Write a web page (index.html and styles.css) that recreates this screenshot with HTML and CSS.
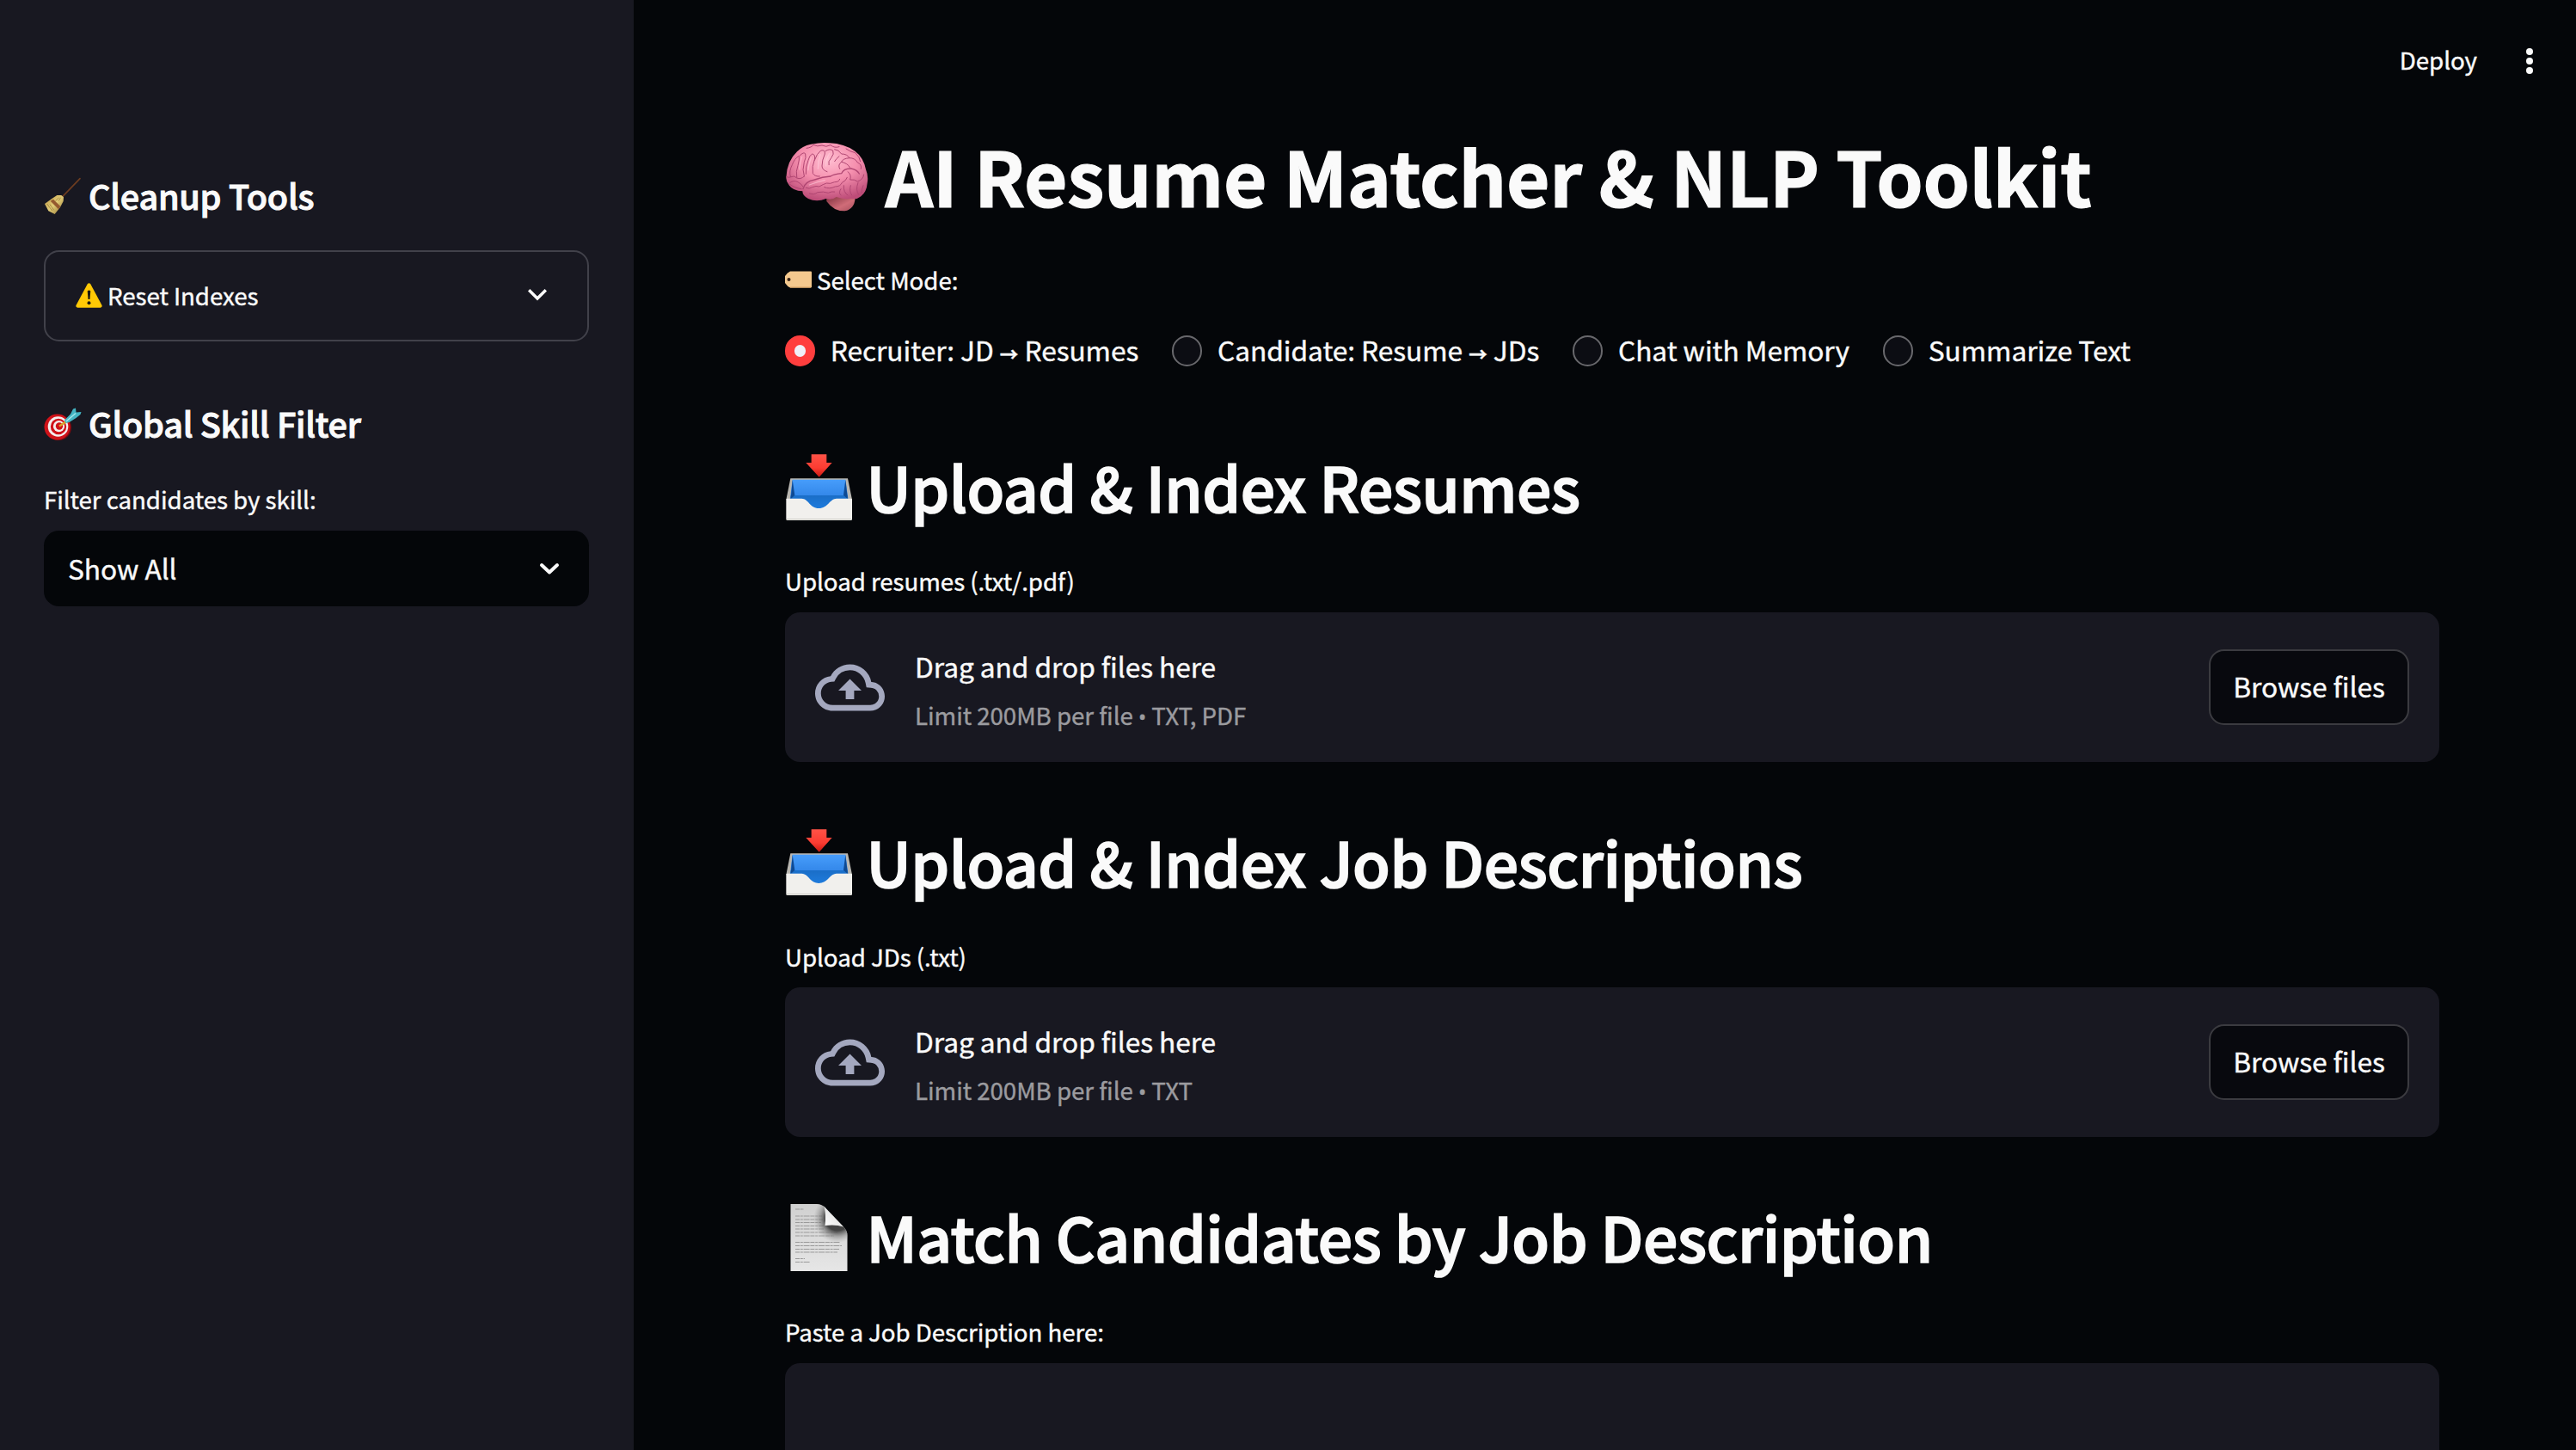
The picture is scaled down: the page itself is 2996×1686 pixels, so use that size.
FILE: index.html
```html
<!DOCTYPE html>
<html lang="en">
<head>
<meta charset="utf-8">
<title>AI Resume Matcher &amp; NLP Toolkit</title>
<link rel="stylesheet" href="styles.css">
</head>
<body>
<svg class="defs" width="0" height="0" aria-hidden="true">
  <defs>
    <linearGradient id="blue" x1="0" y1="0" x2="0" y2="1"><stop offset="0" stop-color="#479dfb"/><stop offset=".55" stop-color="#3488ea"/><stop offset=".56" stop-color="#1a6ec8"/><stop offset="1" stop-color="#1e7bdc"/></linearGradient>
    <linearGradient id="red" x1="0" y1="0" x2="0" y2="1"><stop offset="0" stop-color="#ff5246"/><stop offset=".6" stop-color="#fb3c32"/><stop offset="1" stop-color="#c81810"/></linearGradient>
    <symbol id="tray" viewBox="24 20 243 237">
      <path d="M119 24h53v29h19l-45 50-46-50h19z" fill="url(#red)"/>
      <path d="M46 108h200l15 74H31z" fill="#b9b7b2"/>
      <path d="M53 112h185l10 72-52 28H98l-54-28z" fill="url(#blue)"/>
      <path d="M53 112l8 54-14 14zM238 112l-7 54 15 14z" fill="#0e4a94"/>
      <path d="M31 181q0-3 4-3h50c24 0 28 34 60 34s38-34 62-34h50q4 0 4 3v69q0 4-4 4H35q-4 0-4-4z" fill="#f1f0ed"/>
      <path d="M33 250h226" stroke="#cfcdc8" stroke-width="4"/>
    </symbol>
    <symbol id="cloud" viewBox="0 0 24 24">
      <path d="M19.35 10.04A7.49 7.49 0 0 0 12 4C9.11 4 6.6 5.64 5.35 8.04A5.994 5.994 0 0 0 0 14c0 3.31 2.69 6 6 6h13c2.76 0 5-2.24 5-5 0-2.64-2.05-4.78-4.65-4.96zM19 18H6c-2.21 0-4-1.79-4-4 0-2.05 1.53-3.76 3.56-3.97l1.07-.11.5-.95A5.469 5.469 0 0 1 12 6c2.62 0 4.88 1.86 5.39 4.43l.3 1.5 1.53.11A2.98 2.98 0 0 1 22 15c0 1.65-1.35 3-3 3zM8 13h2.55v3h2.9v-3H16l-4-4z" fill="currentColor"/>
    </symbol>
  </defs>
</svg>
<div class="app">
  <aside class="sidebar">
    <h3 class="side-title">
      <svg class="side-icon" width="44" height="46" viewBox="33 24 132 138">
        <defs><linearGradient id="straw" x1="0" y1="0" x2="1" y2="1"><stop offset="0" stop-color="#b8923f"/><stop offset=".5" stop-color="#e2cc78"/><stop offset="1" stop-color="#8e6f2c"/></linearGradient></defs>
        <path d="M159 32L96 97" stroke="#6e3d20" stroke-width="5" stroke-linecap="round"/>
        <path d="M94 90l8 7-1 14-11 21-19 24-22-11-13-25 26-19 17-11z" fill="url(#straw)"/>
        <path d="M66 104l25 25-7 10-28-29z" fill="#94592f"/>
        <path d="M44 120l18 24M54 122l14 20M92 98l-8 12M86 98l-12 12" stroke="#8a6c2c" stroke-width="2"/>
      </svg>
      <span class="side-text">Cleanup Tools</span>
    </h3>
    <div class="expander">
      <svg class="warn" width="31" height="29" viewBox="0 0 31 29">
        <path d="M13.600 1.400q1.900-2.400 3.800 0l13 24.400q1 2.600-1.600 2.900H2.200Q-.500 28.400.600 25.800z" fill="#ffc905"/>
        <path d="M13.700 9.500q1.800-2 3.600 0l-.8 9.500h-2z" fill="#1c1a10"/><circle cx="15.500" cy="23.300" r="2" fill="#1c1a10"/>
      </svg>
      <span class="label-text">Reset Indexes</span>
      <svg class="chevron" width="24" height="15" viewBox="0 0 24 15"><path d="M2.200 2.200L12 12l9.800-9.800" fill="none" stroke="#fafafa" stroke-width="3.400"/></svg>
    </div>
    <h3 class="side-title second">
      <svg class="side-icon" width="44" height="38" viewBox="0 0 44 38">
        <ellipse cx="17" cy="23" rx="15" ry="15" fill="#7e0a10"/>
        <circle cx="15.500" cy="22.500" r="15" fill="#cf1219"/><circle cx="16.500" cy="22" r="11.800" fill="#f4eeee"/><circle cx="17" cy="22" r="9.200" fill="#cf1219"/><circle cx="17.500" cy="21.700" r="6.600" fill="#f4eeee"/><circle cx="18" cy="21.500" r="4.200" fill="#cf1219"/>
        <path d="M18 21.500l9-6" stroke="#d9a72b" stroke-width="2.400"/>
        <path d="M24 14.500l7-7 3-6 3-1 .5 5 6-.5-1 3-5 4-8 5-4 1z" fill="#43b4c2"/>
        <path d="M26 16l11-9.500" stroke="#a2e6ea" stroke-width="1.600"/>
      </svg>
      <span class="side-text">Global Skill Filter</span>
    </h3>
    <div class="label side-label">Filter candidates by skill:</div>
    <div class="select">
      <span class="select-value">Show All</span>
      <svg width="24" height="15" viewBox="0 0 24 15"><path d="M3 3l9 8.500L21 3" fill="none" stroke="#fafafa" stroke-width="4" stroke-linecap="round" stroke-linejoin="round"/></svg>
    </div>
  </aside>
  <main class="main">
    <header class="toolbar">
      <span class="deploy">Deploy</span>
      <svg width="10" height="32" viewBox="0 0 10 32" fill="#fafafa"><circle cx="5" cy="5" r="4"/><circle cx="5" cy="16" r="4"/><circle cx="5" cy="27" r="4"/></svg>
    </header>
    <div class="content">
      <h1 class="title">
        <svg class="brain" width="97" height="82" viewBox="27 28 291 246">
          <defs>
            <radialGradient id="pink" cx=".52" cy=".3" r=".7"><stop offset="0" stop-color="#ffbdd0"/><stop offset=".5" stop-color="#f58fae"/><stop offset="1" stop-color="#bd4c78"/></radialGradient>
            <linearGradient id="stem" x1="0" y1="0" x2="1" y2="1"><stop offset="0" stop-color="#7c2f3c"/><stop offset=".6" stop-color="#d06c78"/><stop offset="1" stop-color="#a8505e"/></linearGradient>
          </defs>
          <path d="M172 216l100 6q-2 40-36 47-38 2-64-34z" fill="url(#stem)"/>
          <path d="M31 152q2-56 38-90 18-20 48-26 40-8 66-4 50 2 88 28 30 22 38 64 10 24 5 48-2 30-22 46-14 12-34 8-24 4-52-6-14 12-36 6-32 14-62 0-20-10-20-26-34-2-46-20-12-14-11-28z" fill="url(#pink)"/>
          <g fill="none" stroke="#b04672" stroke-width="3" stroke-linecap="round" stroke-linejoin="round">
            <path d="M90 192q6-26 40-32 28-10 56-12 12-8 38-10 8-18 34-17 20 4 28 18" stroke-width="4"/>
            <path d="M68 152q-4-22 4-42 6-22 4-32 18-18 22-8 4 12-4 28-8 28 0 50M46 150q-6-20 6-42 8-22 22-30M32 150q10 4 16 0 12-6 20 4 14 6 26-6"/>
            <path d="M100 140q-2-26 8-48 4-18 14-22 12 2 8 20-10 24-6 48 8 12 24 10M130 92q8-24 22-34 16-4 14 12-10 22-10 42 0 14 18 20M168 60q14-10 26-2 6 12-6 26-12 12-8 24"/>
            <path d="M200 54q14 0 24 16 20 0 28 14-24 2-28 14-14 10-6 24M216 78q-10 8-16 18M252 84q20 0 28 16 16 6 12 22M224 98q22 4 30 20M240 52q14 10 32 14 16 14 18 30"/>
            <path d="M102 50q18-2 24-12 14 8 30 2 14 8 30-1 14 12 30 6"/>
            <path d="M44 170q14-10 28-2 12 6 18 16M44 176q14 12 40 16"/>
            <path d="M100 188q12 6 22-2 14-6 24-2 14-8 26-12 12 4 28-4 16 0 18-10M112 208q18 6 28-4 22-4 38 2 12-6 22-4M164 186q18 8 38-2 18 0 24-14 14-6 18-18M246 132q14 10 8 28 16-2 26 6 20-6 22-24M232 180q-2 24 14 34M256 180q-6 20 4 34M282 170q-10 26 2 42M300 180q-6 14-6 26M222 192q-10 14 0 22"/>
          </g>
          <g fill="none" stroke="#ffd0de" stroke-width="4" stroke-linecap="round" opacity=".55">
            <path d="M86 80q-8 26-8 44M118 84q-10 26-10 42M150 72q-8 26-8 50M182 68q-14 24-12 44M112 178q30-12 54-16"/>
          </g>
        </svg>
        <span class="title-text">AI Resume Matcher &amp; NLP Toolkit</span>
      </h1>
      <div class="label mode-label">
        <svg width="31" height="20" viewBox="0 0 31 20"><path d="M6 .5h24q1 0 1 1v17q0 1-1 1H6q-3-1-6-5.500v-8Q3 1.500 6 .5z" fill="#f4c88e"/><path d="M6 19h24" stroke="#d9a468" stroke-width="1.200"/><circle cx="4.500" cy="10" r="2" fill="#3a2416"/></svg>
        <span>Select Mode:</span>
      </div>
      <div class="radios">
        <label class="radio"><span class="dot on"></span><span class="radio-text">Recruiter: JD <span class="arrow">→</span> Resumes</span></label>
        <label class="radio"><span class="dot"></span><span class="radio-text">Candidate: Resume <span class="arrow">→</span> JDs</span></label>
        <label class="radio"><span class="dot"></span><span class="radio-text">Chat with Memory</span></label>
        <label class="radio"><span class="dot"></span><span class="radio-text">Summarize Text</span></label>
      </div>

      <section class="section first">
        <h2 class="heading"><svg class="heading-icon" width="81" height="79"><use href="#tray"/></svg><span>Upload &amp; Index Resumes</span></h2>
        <div class="label">Upload resumes (.txt/.pdf)</div>
        <div class="uploader">
          <svg class="cloud" width="81" height="81"><use href="#cloud"/></svg>
          <div class="drop">
            <div class="drop-main">Drag and drop files here</div>
            <div class="drop-note">Limit 200MB per file <span class="bullet">•</span> TXT, PDF</div>
          </div>
          <button class="browse">Browse files</button>
        </div>
      </section>

      <section class="section">
        <h2 class="heading"><svg class="heading-icon" width="81" height="79"><use href="#tray"/></svg><span>Upload &amp; Index Job Descriptions</span></h2>
        <div class="label">Upload JDs (.txt)</div>
        <div class="uploader">
          <svg class="cloud" width="81" height="81"><use href="#cloud"/></svg>
          <div class="drop">
            <div class="drop-main">Drag and drop files here</div>
            <div class="drop-note">Limit 200MB per file <span class="bullet">•</span> TXT</div>
          </div>
          <button class="browse">Browse files</button>
        </div>
      </section>

      <section class="section">
        <h2 class="heading">
          <svg class="heading-icon" width="81" height="79" viewBox="0 0 81 79">
            <defs>
              <linearGradient id="paper" x1="0" y1="0" x2="0" y2="1"><stop offset="0" stop-color="#d0d0d0"/><stop offset="1" stop-color="#e6e6e6"/></linearGradient>
              <radialGradient id="shade" gradientUnits="userSpaceOnUse" cx="62" cy="18" r="28"><stop offset=".5" stop-color="#444"/><stop offset=".75" stop-color="#777" stop-opacity=".5"/><stop offset="1" stop-color="#999" stop-opacity="0"/></radialGradient>
              <linearGradient id="curl" x1="0" y1="1" x2="1" y2="0"><stop offset="0" stop-color="#fff"/><stop offset="1" stop-color="#d4d4d4"/></linearGradient>
            </defs>
            <path d="M7.500 1H38q6 0 10 4.500l20 21q5.500 5 5.500 11V79h-66z" fill="url(#paper)"/>
            <path d="M13 7h10M13 15h31M13 19h32M13 22.500h30M13 26.500h33M13 30h33M13 34h49M13 38h45M13 45.500h52M13 49.500h54M13 53.500h51M13 57h49M13 64.500h11M13 68.500h17" stroke="#9a9a9a" stroke-width="1.100" stroke-dasharray="5 .8 3 .8 7 .8"/>
            <path d="M7.500 1H38q6 0 10 4.500l20 21q5.500 5 5.500 11V79h-66z" fill="url(#shade)"/>
            <path d="M46.500 3.500l1.500 2 21 22q-9-3-21.500-1.500Q49 14 46.500 3.500z" fill="url(#curl)"/>
          </svg>
          <span>Match Candidates by Job Description</span>
        </h2>
        <div class="label">Paste a Job Description here:</div>
        <div class="textarea"></div>
      </section>
    </div>
  </main>
</div>
</body>
</html>
```
FILE: styles.css
```css
* { box-sizing: border-box; }

body {
  margin: 0;
  background: #040609;
  color: #fafafa;
  font-family: "Noto Sans CJK SC", "Noto Sans", sans-serif;
  font-size: 31.7px;
  letter-spacing: -0.05px;
  -webkit-text-stroke: 0.4px currentColor;
}

svg { display: block; flex: none; }
.defs { position: absolute; }

h1, h2, h3 { margin: 0; }

.app {
  display: flex;
  height: 1686px;
  overflow: hidden;
}

/* Sidebar */
.sidebar {
  flex: none;
  width: 737px;
  padding: 201px 52px 0 51px;
  background: #181821;
}

.side-title {
  display: flex;
  align-items: center;
  gap: 8px;
  height: 52px;
  font-size: 39.6px;
  line-height: 52px;
  font-weight: 500;
  letter-spacing: -0.26px;
  -webkit-text-stroke: 1px #fafafa;
}

.side-icon { margin-top: 1px; }
.side-title.second { margin-top: 69px; }

.expander {
  display: flex;
  align-items: center;
  height: 106px;
  margin-top: 38px;
  padding: 0 46px 2px 35px;
  border: 2px solid #41414a;
  border-radius: 17.6px;
}

.warn { margin-right: 6px; }

.label-text {
  font-size: 27.7px;
  line-height: 46px;
}

.expander .chevron {
  margin-left: auto;
  margin-bottom: 1px;
}

.label {
  height: 46px;
  font-size: 27.7px;
  line-height: 46px;
}

.side-label { margin-top: 39px; }

.select {
  display: flex;
  align-items: center;
  justify-content: space-between;
  height: 88px;
  margin-top: 14px;
  padding: 0 34px 0 28px;
  border-radius: 17.6px;
  background: #040609;
  line-height: 50px;
}

.select-value { margin-bottom: 3px; }

/* Main column */
.main {
  flex: 1;
  display: flex;
  flex-direction: column;
}

.toolbar {
  flex: none;
  display: flex;
  align-items: center;
  justify-content: flex-end;
  gap: 56px;
  height: 145px;
  padding: 0 49px 3px 0;
}

.deploy {
  margin-bottom: 4px;
  font-size: 27.7px;
  line-height: 46px;
}

.content {
  width: 1924px;
  margin-left: 176px;
}

.title {
  display: flex;
  align-items: center;
  gap: 19.5px;
  height: 116px;
  font-size: 87.1px;
  line-height: 116px;
  font-weight: 700;
  letter-spacing: -0.3px;
  -webkit-text-stroke: 1.2px #fafafa;
  white-space: nowrap;
}

.brain { margin-top: 6px; }

.mode-label {
  display: flex;
  align-items: center;
  gap: 6px;
  margin-top: 41px;
}

.radios {
  display: flex;
  gap: 39px;
  height: 36px;
  margin-top: 42px;
}

.radio {
  display: flex;
  align-items: center;
  gap: 17.6px;
}

.radio-text {
  line-height: 36px;
  margin-bottom: 4px;
  white-space: nowrap;
}

.arrow {
  font-size: 21.6px;
  font-weight: 700;
  line-height: 1;
}

.dot {
  width: 35.2px;
  height: 35.2px;
  border: 2px solid #68686c;
  border-radius: 50%;
  background: #0c0d13;
}

.dot.on {
  border: 11.1px solid #ff3e3e;
  background: #f0f0f8;
}

.section { margin-top: 67px; }
.section.first { margin-top: 91px; }

.heading {
  display: flex;
  align-items: center;
  height: 96px;
  font-size: 71.3px;
  line-height: 96px;
  font-weight: 500;
  letter-spacing: -0.48px;
  -webkit-text-stroke: 1.7px #fafafa;
  white-space: nowrap;
}

.heading-icon { margin: 2px 14.5px 0 -1px; }

.section .label { margin-top: 40px; }
.section.first .label { margin-top: 39px; }

.uploader {
  display: flex;
  align-items: center;
  height: 174px;
  margin-top: 13px;
  padding: 0 35px;
  border-radius: 17.6px;
  background: #181821;
}

.section.first .uploader { margin-top: 14px; }

.cloud { color: #a4a8bf; }

.drop { margin-left: 35px; }

.drop-main {
  height: 58px;
  margin-top: 6px;
  line-height: 56px;
}

.drop-note {
  height: 54px;
  font-size: 27.7px;
  line-height: 54px;
  color: #9b9b9f;
}

.bullet {
  font-family: "Noto Sans", sans-serif;
  font-size: 24.5px;
  line-height: 1;
}

.browse {
  width: 233px;
  height: 88px;
  margin-left: auto;
  padding: 0 0 4px;
  border: 2px solid #3b3b40;
  border-radius: 17.6px;
  background: #08090e;
  color: #fafafa;
  font: inherit;
  letter-spacing: inherit;
  line-height: 50px;
  white-space: nowrap;
}

.textarea {
  height: 220px;
  margin-top: 14px;
  border-radius: 17.6px;
  background: #181821;
}
```
